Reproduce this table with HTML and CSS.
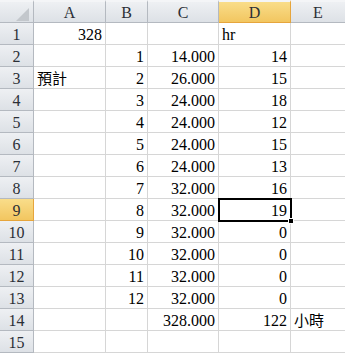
FILE: index.html
```html
<!DOCTYPE html>
<html lang="zh-Hant">
  <head>
    <meta charset="UTF-8" />
    <title>工時統計</title>
    <link rel="stylesheet" href="styles.css">
  </head>
  <body>
    <div class="sheet">
      <div class="hdr corner"><span class="corner-tri"></span></div>
      <div class="hdr col">A</div>
      <div class="hdr col">B</div>
      <div class="hdr col">C</div>
      <div class="hdr col active">D</div>
      <div class="hdr col last">E</div>

      <div class="hdr row">1</div>
      <div class="cell num">328</div>
      <div class="cell"></div>
      <div class="cell"></div>
      <div class="cell">hr</div>
      <div class="cell last"></div>

      <div class="hdr row">2</div>
      <div class="cell"></div>
      <div class="cell num">1</div>
      <div class="cell num">14.000</div>
      <div class="cell num">14</div>
      <div class="cell last"></div>

      <div class="hdr row">3</div>
      <div class="cell cjk">預計</div>
      <div class="cell num">2</div>
      <div class="cell num">26.000</div>
      <div class="cell num">15</div>
      <div class="cell last"></div>

      <div class="hdr row">4</div>
      <div class="cell"></div>
      <div class="cell num">3</div>
      <div class="cell num">24.000</div>
      <div class="cell num">18</div>
      <div class="cell last"></div>

      <div class="hdr row">5</div>
      <div class="cell"></div>
      <div class="cell num">4</div>
      <div class="cell num">24.000</div>
      <div class="cell num">12</div>
      <div class="cell last"></div>

      <div class="hdr row">6</div>
      <div class="cell"></div>
      <div class="cell num">5</div>
      <div class="cell num">24.000</div>
      <div class="cell num">15</div>
      <div class="cell last"></div>

      <div class="hdr row">7</div>
      <div class="cell"></div>
      <div class="cell num">6</div>
      <div class="cell num">24.000</div>
      <div class="cell num">13</div>
      <div class="cell last"></div>

      <div class="hdr row">8</div>
      <div class="cell"></div>
      <div class="cell num">7</div>
      <div class="cell num">32.000</div>
      <div class="cell num">16</div>
      <div class="cell last"></div>

      <div class="hdr row active">9</div>
      <div class="cell"></div>
      <div class="cell num">8</div>
      <div class="cell num">32.000</div>
      <div class="cell num selected">19<span class="fill-handle"></span></div>
      <div class="cell last"></div>

      <div class="hdr row">10</div>
      <div class="cell"></div>
      <div class="cell num">9</div>
      <div class="cell num">32.000</div>
      <div class="cell num">0</div>
      <div class="cell last"></div>

      <div class="hdr row">11</div>
      <div class="cell"></div>
      <div class="cell num">10</div>
      <div class="cell num">32.000</div>
      <div class="cell num">0</div>
      <div class="cell last"></div>

      <div class="hdr row">12</div>
      <div class="cell"></div>
      <div class="cell num">11</div>
      <div class="cell num">32.000</div>
      <div class="cell num">0</div>
      <div class="cell last"></div>

      <div class="hdr row">13</div>
      <div class="cell"></div>
      <div class="cell num">12</div>
      <div class="cell num">32.000</div>
      <div class="cell num">0</div>
      <div class="cell last"></div>

      <div class="hdr row">14</div>
      <div class="cell"></div>
      <div class="cell"></div>
      <div class="cell num">328.000</div>
      <div class="cell num">122</div>
      <div class="cell last cjk">小時</div>

      <div class="hdr row">15</div>
      <div class="cell"></div>
      <div class="cell"></div>
      <div class="cell"></div>
      <div class="cell"></div>
      <div class="cell last"></div>
    </div>
  </body>
</html>
```

FILE: styles.css
```css
* {
  margin: 0;
  padding: 0;
  box-sizing: border-box;
}
body {
  background: #ffffff;
  font-family: "Liberation Serif", "Noto Sans CJK TC", serif;
  font-size: 16px;
  color: #000;
  overflow: hidden;
}
.sheet {
  display: grid;
  grid-template-columns: 34px 72px 42px 71px 72px 1fr;
  grid-template-rows: 23px;
  grid-auto-rows: 22px;
  width: 345px;
}
.hdr {
  display: flex;
  align-items: flex-end;
  justify-content: center;
  line-height: 16px;
  color: #2b2f36;
  background: linear-gradient(#eef0f3, #dde1e6);
  border-right: 1px solid #b4b9c0;
  border-bottom: 1px solid #b4b9c0;
}
.hdr.col {
  border-top: 2px solid #f4f5f7;
  padding-bottom: 1px;
}
.hdr.corner {
  position: relative;
  border-top: 2px solid #f4f5f7;
}
.corner-tri {
  position: absolute;
  left: 16px;
  top: 6px;
  width: 13px;
  height: 13px;
  background: #c3c7cc;
  clip-path: polygon(100% 0, 100% 100%, 0 100%);
}
.hdr.row {
  padding-bottom: 1px;
}
.hdr.active {
  background: linear-gradient(#f9dd8a, #f2c660);
  border-right-color: #e6a53c;
  border-bottom-color: #e6a53c;
}
.hdr.last {
  border-right: none;
}
.cell {
  display: flex;
  align-items: flex-end;
  line-height: 16px;
  padding: 0 3px 1px 3px;
  border-right: 1px solid #d6d6d6;
  border-bottom: 1px solid #d6d6d6;
  white-space: nowrap;
}
.cell.num {
  justify-content: flex-end;
}
.cell.cjk {
  font-family: "Noto Sans CJK TC", sans-serif;
  font-size: 15px;
  padding-bottom: 2px;
}
.cell.last {
  border-right: none;
}
.cell.selected {
  position: relative;
  outline: 2px solid #000;
  outline-offset: -1px;
  z-index: 2;
}
.fill-handle {
  position: absolute;
  right: -4px;
  bottom: -4px;
  width: 6px;
  height: 6px;
  background: #000;
  border: 1px solid #fff;
}
```
